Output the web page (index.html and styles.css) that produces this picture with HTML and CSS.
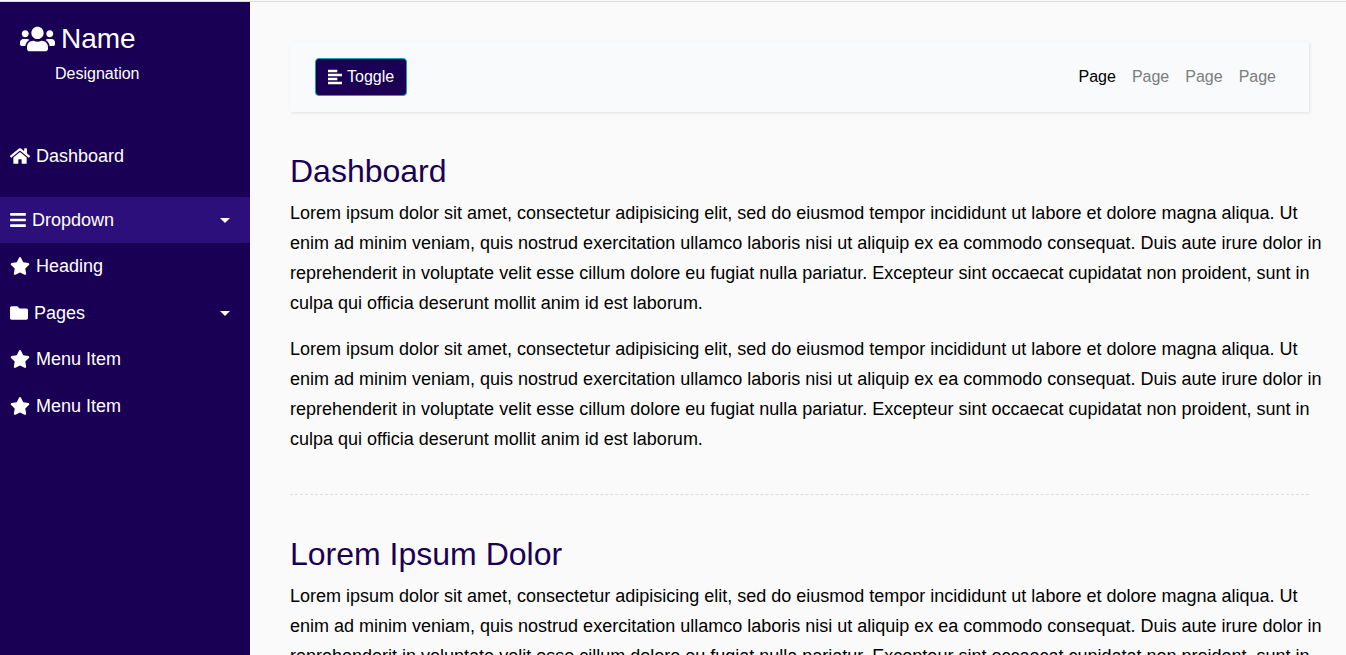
FILE: index.html
```html
<!DOCTYPE html>
<html lang="en">
<head>
<meta charset="utf-8">
<title>Dashboard</title>
<link rel="stylesheet" href="styles.css">
</head>
<body>
<div class="wrapper">
  <nav class="sidebar" aria-label="Sidebar">
    <header class="profile">
      <h3 class="profile-name">
        <svg class="icon-users" viewBox="0 0 640 512" aria-hidden="true"><path d="M96 224c35.300 0 64-28.700 64-64s-28.700-64-64-64-64 28.700-64 64 28.700 64 64 64zm448 0c35.300 0 64-28.700 64-64s-28.700-64-64-64-64 28.700-64 64 28.700 64 64 64zm32 32h-64c-17.600 0-33.500 7.100-45.100 18.600 40.300 22.100 68.900 62 75.100 109.400h66c17.700 0 32-14.300 32-32v-32c0-35.300-28.700-64-64-64zm-256 0c61.900 0 112-50.100 112-112S381.900 32 320 32 208 82.100 208 144s50.100 112 112 112zm76.800 32h-8.300c-20.800 10-43.900 16-68.500 16s-47.600-6-68.500-16h-8.300C179.600 288 128 339.600 128 403.200V432c0 26.500 21.500 48 48 48h288c26.500 0 48-21.500 48-48v-28.800c0-63.600-51.600-115.200-115.200-115.200zm-223.700-13.400C161.500 263.100 145.600 256 128 256H64c-35.300 0-64 28.700-64 64v32c0 17.700 14.300 32 32 32h65.900c6.300-47.400 34.900-87.300 75.200-109.400z"/></svg>
        <span>Name</span>
      </h3>
      <p class="designation">Designation</p>
    </header>

    <ul class="menu menu-main">
      <li><a class="menu-link" href="#">
        <svg class="icon icon-wide" viewBox="0 0 576 512" aria-hidden="true"><path d="M280.370 148.260L96 300.110V464a16 16 0 0 0 16 16l112.060-.29a16 16 0 0 0 15.920-16V368a16 16 0 0 1 16-16h64a16 16 0 0 1 16 16v95.640a16 16 0 0 0 16 16.050L464 480a16 16 0 0 0 16-16V300L295.670 148.260a12.190 12.190 0 0 0-15.300 0zM571.600 251.470L488 182.560V44.050a12 12 0 0 0-12-12h-56a12 12 0 0 0-12 12v72.610L318.470 43a48 48 0 0 0-61 0L4.340 251.470a12 12 0 0 0-1.600 16.900l25.500 31A12 12 0 0 0 45.150 301l235.220-193.740a12.190 12.190 0 0 1 15.300 0L530.900 301a12 12 0 0 0 16.900-1.600l25.500-31a12 12 0 0 0-1.700-16.930z"/></svg>
        <span>Dashboard</span></a></li>
    </ul>

    <div class="menu-groups">
      <ul class="menu">
        <li><a class="menu-link menu-link-active" href="#" aria-haspopup="true">
          <svg class="icon icon-narrow" viewBox="0 0 448 512" aria-hidden="true"><path d="M16 132h416c8.837 0 16-7.163 16-16V76c0-8.837-7.163-16-16-16H16C7.163 60 0 67.163 0 76v40c0 8.837 7.163 16 16 16zm0 160h416c8.837 0 16-7.163 16-16v-40c0-8.837-7.163-16-16-16H16c-8.837 0-16 7.163-16 16v40c0 8.837 7.163 16 16 16zm0 160h416c8.837 0 16-7.163 16-16v-40c0-8.837-7.163-16-16-16H16c-8.837 0-16 7.163-16 16v40c0 8.837 7.163 16 16 16z"/></svg>
          <span>Dropdown</span><i class="caret"></i></a></li>
        <li><a class="menu-link" href="#">
          <svg class="icon icon-wide" viewBox="0 0 576 512" aria-hidden="true"><path d="M259.300 17.800L194 150.200 47.900 171.500c-26.200 3.800-36.700 36.100-17.700 54.600l105.700 103-25 145.500c-4.500 26.300 23.200 46 46.400 33.700L288 439.600l130.700 68.700c23.200 12.200 50.900-7.400 46.400-33.700l-25-145.500 105.700-103c19-18.500 8.500-50.800-17.700-54.600L382 150.200 316.700 17.800c-11.700-23.600-45.600-23.900-57.400 0z"/></svg>
          <span>Heading</span></a></li>
      </ul>
      <ul class="menu">
        <li><a class="menu-link" href="#" aria-haspopup="true">
          <svg class="icon" viewBox="0 0 512 512" aria-hidden="true"><path d="M464 128H272l-64-64H48C21.490 64 0 85.490 0 112v288c0 26.510 21.490 48 48 48h416c26.510 0 48-21.490 48-48V176c0-26.510-21.490-48-48-48z"/></svg>
          <span>Pages</span><i class="caret"></i></a></li>
        <li><a class="menu-link" href="#">
          <svg class="icon icon-wide" viewBox="0 0 576 512" aria-hidden="true"><path d="M259.300 17.800L194 150.200 47.900 171.500c-26.200 3.800-36.700 36.100-17.700 54.600l105.700 103-25 145.500c-4.500 26.300 23.200 46 46.400 33.700L288 439.600l130.700 68.700c23.200 12.200 50.900-7.400 46.400-33.700l-25-145.500 105.700-103c19-18.500 8.500-50.800-17.700-54.600L382 150.200 316.700 17.800c-11.700-23.600-45.600-23.900-57.400 0z"/></svg>
          <span>Menu Item</span></a></li>
      </ul>
      <ul class="menu">
        <li><a class="menu-link" href="#">
          <svg class="icon icon-wide" viewBox="0 0 576 512" aria-hidden="true"><path d="M259.300 17.800L194 150.200 47.900 171.500c-26.200 3.800-36.700 36.100-17.700 54.600l105.700 103-25 145.500c-4.500 26.300 23.200 46 46.400 33.700L288 439.600l130.700 68.700c23.200 12.200 50.900-7.400 46.400-33.700l-25-145.500 105.700-103c19-18.500 8.500-50.800-17.700-54.600L382 150.200 316.700 17.800c-11.700-23.600-45.600-23.900-57.400 0z"/></svg>
          <span>Menu Item</span></a></li>
      </ul>
    </div>
  </nav>

  <main class="content">
    <nav class="navbar" aria-label="Pages">
      <button class="toggle" type="button">
        <svg class="icon-align" viewBox="0 0 14 16" aria-hidden="true"><path d="M0 .8h9.300v2.400H0zM0 4.800h14v2.400H0zM0 8.800h9.300v2.400H0zM0 12.800h14v2.400H0z"/></svg>
        <span>Toggle</span>
      </button>
      <ul class="page-links">
        <li><a class="page-link page-link-active" href="#">Page</a></li>
        <li><a class="page-link" href="#">Page</a></li>
        <li><a class="page-link" href="#">Page</a></li>
        <li><a class="page-link" href="#">Page</a></li>
      </ul>
    </nav>

    <section class="section">
      <h2>Dashboard</h2>
      <p>Lorem ipsum dolor sit amet, consectetur adipisicing elit, sed do eiusmod tempor incididunt ut labore et dolore magna aliqua. Ut enim ad minim veniam, quis nostrud exercitation ullamco laboris nisi ut aliquip ex ea commodo consequat. Duis aute irure dolor in reprehenderit in voluptate velit esse cillum dolore eu fugiat nulla pariatur. Excepteur sint occaecat cupidatat non proident, sunt in culpa qui officia deserunt mollit anim id est laborum.</p>
      <p>Lorem ipsum dolor sit amet, consectetur adipisicing elit, sed do eiusmod tempor incididunt ut labore et dolore magna aliqua. Ut enim ad minim veniam, quis nostrud exercitation ullamco laboris nisi ut aliquip ex ea commodo consequat. Duis aute irure dolor in reprehenderit in voluptate velit esse cillum dolore eu fugiat nulla pariatur. Excepteur sint occaecat cupidatat non proident, sunt in culpa qui officia deserunt mollit anim id est laborum.</p>
    </section>

    <hr class="line">

    <section class="section">
      <h2>Lorem Ipsum Dolor</h2>
      <p>Lorem ipsum dolor sit amet, consectetur adipisicing elit, sed do eiusmod tempor incididunt ut labore et dolore magna aliqua. Ut enim ad minim veniam, quis nostrud exercitation ullamco laboris nisi ut aliquip ex ea commodo consequat. Duis aute irure dolor in reprehenderit in voluptate velit esse cillum dolore eu fugiat nulla pariatur. Excepteur sint occaecat cupidatat non proident, sunt in culpa qui officia deserunt mollit anim id est laborum.</p>
    </section>
  </main>
</div>
</body>
</html>
```
FILE: styles.css
```css
* {
  box-sizing: border-box;
}

html {
  height: 100%;
}

body {
  margin: 0;
  height: 100%;
  display: flex;
  flex-direction: column;
  overflow: hidden;
  background: #fafafa;
  color: #000;
  font-family: "Liberation Sans", Arial, sans-serif;
  font-size: 16px;
  line-height: 24px;
}

body::before {
  content: "";
  flex: none;
  height: 1px;
  border-bottom: 1px solid #dcdcdc;
}

a {
  color: inherit;
  text-decoration: none;
}

svg {
  flex: none;
  fill: currentColor;
}

.wrapper {
  flex: 1;
  min-height: 0;
  display: flex;
}

/* Sidebar */
.sidebar {
  flex: none;
  width: 250px;
  background: #1a0055;
  color: #fff;
}

.profile {
  padding: 20px 20px 47px;
}

.profile-name {
  display: flex;
  align-items: center;
  gap: 6px;
  margin: 0;
  font-size: 28px;
  font-weight: 400;
  line-height: 34px;
}

.icon-users {
  width: 35px;
  height: 28px;
}

.designation {
  margin: 6px 0 0 35px;
}

.menu {
  margin: 0;
  padding: 0;
  list-style: none;
  font-size: 18px;
  line-height: 26px;
}

.menu-main {
  margin-bottom: 18px;
}

.menu-groups {
  display: grid;
  gap: 1px;
}

.menu-link {
  display: flex;
  align-items: center;
  gap: 6px;
  padding: 10px 20px 10px 10px;
}

.menu-link-active {
  background: #2d0f7c;
}

.icon {
  width: 18px;
  height: 18px;
}

.icon-wide {
  width: 20px;
}

.icon-narrow {
  width: 16px;
}

.caret {
  margin-left: auto;
  border: 5px solid transparent;
  border-top-color: #fff;
  border-bottom: 0;
}

/* Content */
.content {
  flex: 1;
  min-width: 0;
  padding: 40px 20px 40px 40px;
  overflow: hidden;
}

.navbar {
  display: flex;
  align-items: center;
  justify-content: space-between;
  margin: 0 17px 40px 0;
  padding: 15px 25px;
  background: #f8fafc;
  box-shadow: 1px 1px 3px rgba(0, 0, 0, 0.1);
}

.toggle {
  display: flex;
  align-items: center;
  gap: 5px;
  padding: 6px 12px;
  border: 1px solid #17a2b8;
  border-radius: 4px;
  background: #1a0055;
  color: #fff;
  font: inherit;
}

.icon-align {
  width: 14px;
  height: 16px;
}

.page-links {
  display: flex;
  margin: 0;
  padding: 0;
  list-style: none;
}

.page-link {
  display: block;
  padding: 8px;
  color: #7c7d7e;
}

.page-link-active {
  color: #000;
}

.section h2 {
  margin: 0 0 8px;
  color: #1a0055;
  font-size: 32px;
  font-weight: 400;
  line-height: 38px;
}

.section p {
  margin: 0 0 16px;
  font-size: 18px;
  line-height: 30px;
}

.section p:last-child {
  margin-bottom: 0;
}

.line {
  margin: 40px 17px 40px 0;
  border: 0;
  border-top: 1px dashed #ddd;
}
```
